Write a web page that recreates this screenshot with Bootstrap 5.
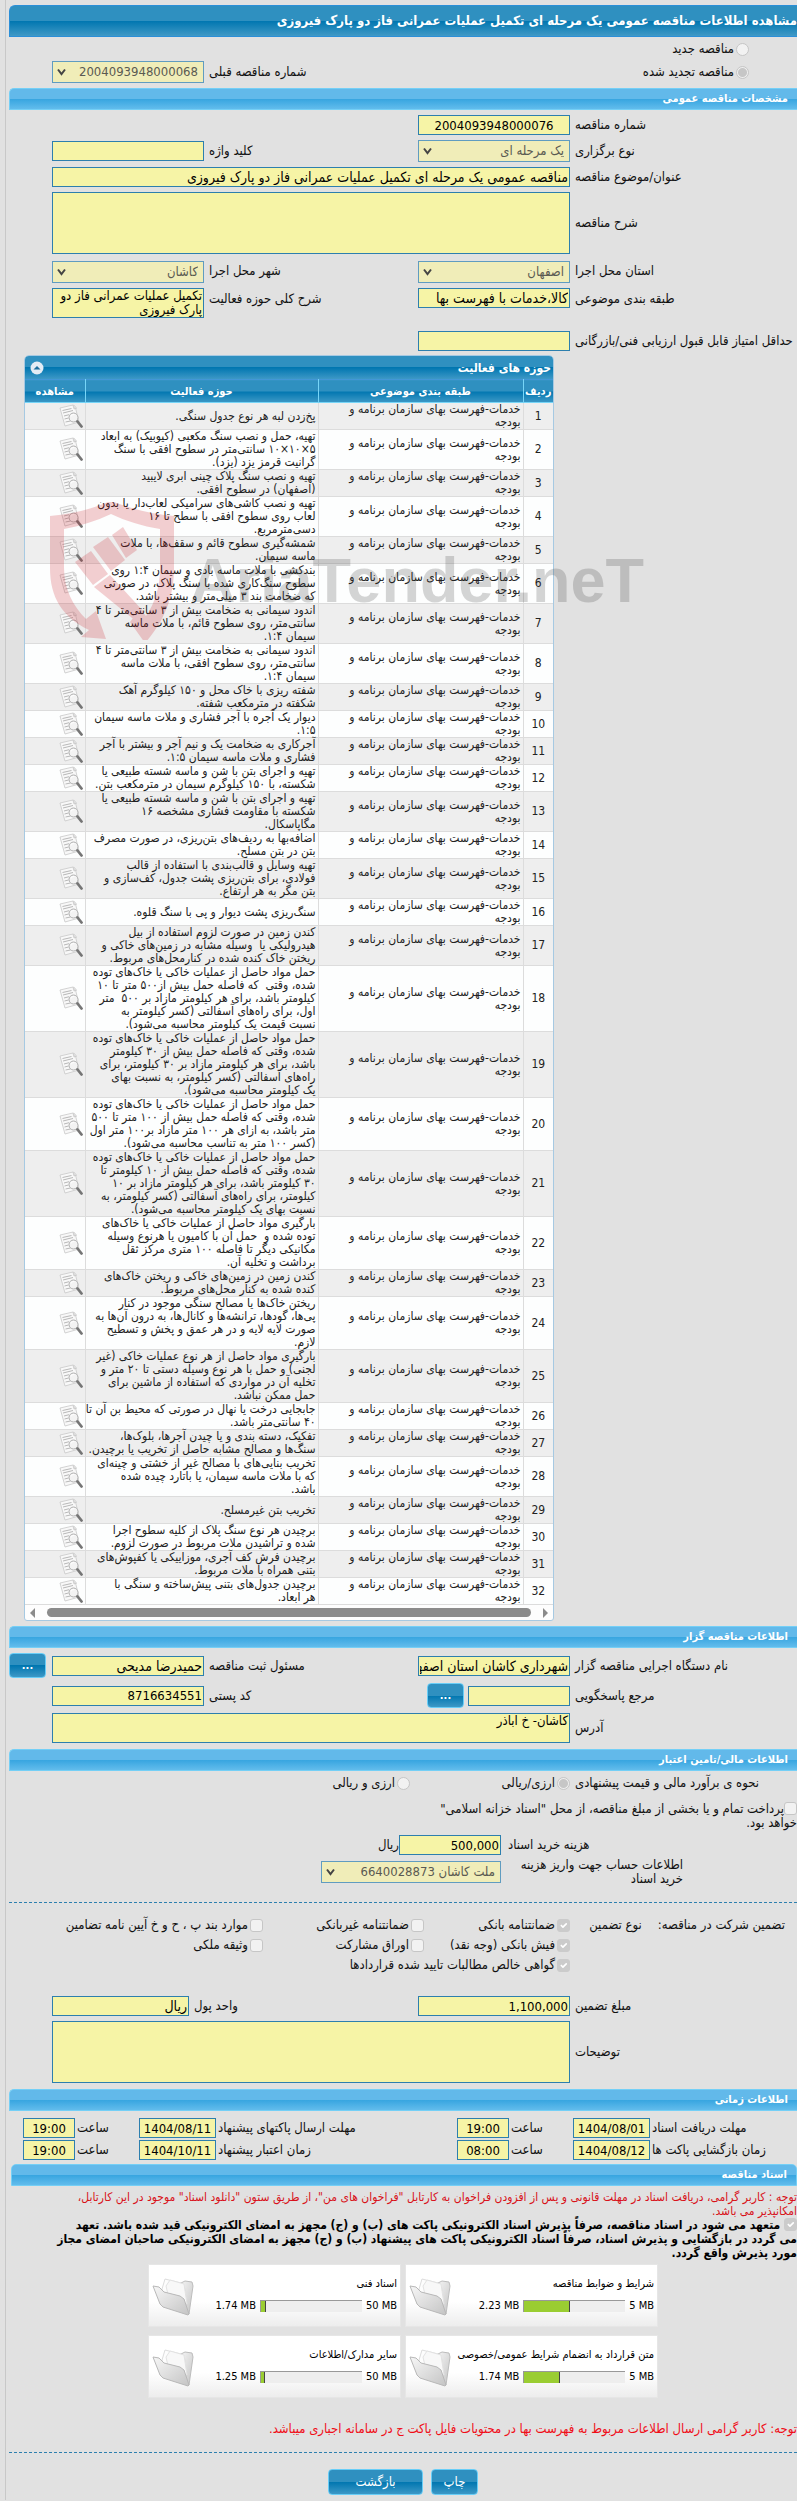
<!DOCTYPE html>
<html lang="fa" dir="rtl">
<head>
<meta charset="utf-8">
<meta name="viewport" content="width=device-width, initial-scale=1">
<title>مشاهده اطلاعات مناقصه عمومی</title>
<link href="https://cdn.jsdelivr.net/npm/bootstrap@5.3.0/dist/css/bootstrap.min.css" rel="stylesheet">
<style>
  body { background: #e1e1e1; color: #111; font: 13px/14px "DejaVu Sans Condensed", "DejaVu Sans", sans-serif; overflow-x: hidden; }
  .page-shell { margin-left: 5px; padding: 5px 0 5px 3px; border-left: 1px solid #c8c8c8; }
  .title-bar { height: 32px; font-size: 13px; font-weight: bold; color: #fff; border: 1px solid #2b8fd8; border-right: 0; border-radius: 6px 0 0 0; background: linear-gradient(#2f90c0 50%, #0076b0 50%, #4099c6); }
  .section-bar { height: 22px; padding: 0 9px; font-size: 11px; font-weight: bold; color: #fff; border: 1px solid #74cff6; border-right: 0; border-radius: 5px 0 0 0; background: linear-gradient(#62b9ea 50%, #37a5e0 50%, #62bcec); }
  .section-bar.inset { margin-left: 2px; border-radius: 5px 5px 0 0; border-right: 1px solid #74cff6; }

  .form-grid { display: grid; grid-template-columns: 227px 152px 1fr 152px 43px; row-gap: 5px; padding-top: 5px; align-items: center; }
  .form-grid > label { padding-left: 5px; text-align: left; white-space: nowrap; }
  .form-grid.closed { padding-bottom: 6px; }
  .kinds { padding: 5px 0; }
  .kinds > .pair { padding-right: 48px; }
  .wide { grid-column: 2 / 5; }
  .next-row { grid-column-start: 1; }
  .form-control.fld, .form-select.fld { min-height: 0; height: 20px; padding: 0 1px; border: 1px solid #2d7fae; border-radius: 0; background-color: #f6f4a6; color: #000; font-size: 13px; line-height: 14px; opacity: 1; }
  .form-control.fld { box-shadow: none; }
  .form-control.fld.fa-text { font-size: 14px; }
  textarea.form-control.fld { resize: none; height: 30px; overflow: hidden; }
  textarea.form-control.fld.tall { height: 62px; }
  .form-select.fld { height: 22px; padding: 0 5px 0 20px; border-color: #609cc0; background-color: #f0edb8; color: #5a5a52; line-height: 18px; background-size: 9px 8px; background-position: left 4px center;
    --bs-form-select-bg-img: url("data:image/svg+xml,%3csvg xmlns='http://www.w3.org/2000/svg' viewBox='0 0 9 8'%3e%3cpath fill='none' stroke='%23444' stroke-width='2' d='M1 1.5l3.5 4.5L8 1.5'/%3e%3c/svg%3e"); background-image: var(--bs-form-select-bg-img); }
  .form-select.fld.place { margin-top: 2px; }
  .form-check-input.tick { float: none; flex: none; width: 13px; height: 13px; margin: 0; border: 1px solid #c6c6c6; border-radius: 3px; background-color: #f2f2f2; opacity: 1; }
  .form-check-input.tick[type=radio] { border-radius: 50%; }
  .form-check-input.tick:disabled ~ label { opacity: 1; }
  .form-check-input.tick[type=checkbox]:checked { background-color: #cbcbcb; border-color: #cbcbcb; }
  .form-check-input.tick[type=radio]:checked { background: radial-gradient(circle, #c6c6c6 4px, #eee 5px); border-color: #c6c6c6; }
  .pair { display: flex; align-items: center; gap: 2px; white-space: nowrap; }
  .btn.act { --bs-btn-color: #fff; --bs-btn-hover-color: #fff; height: 26px; padding: 0 4px; border: 1px solid #68cdf7; border-radius: 4px; background: linear-gradient(#2f90c0 50%, #0076b0 50%, #3d98c6); font-size: 13px; line-height: 14px; }
  .btn.dots { width: 37px; height: 25px; font-weight: bold; font-size: 11px; }

  .grid-box { position: relative; margin: 4px 243px 5px 15px; border: 1px solid #a6c9e2; border-radius: 5px 5px 3px 3px; background: #fdfdfd; }
  .grid-title { height: 23px; padding: 0 2px 0 5px; color: #fff; font-size: 12px; font-weight: bold; border-radius: 4px 4px 0 0; background: linear-gradient(#2f90c0 50%, #0076b0 50%, #3d98c6); }
  .table.acts { table-layout: fixed; margin: 0; color: #222; font-size: 12px; line-height: 13px; --bs-table-bg: #fdfefe; --bs-table-striped-bg: #eeeeee; --bs-table-striped-color: #222; }
  .table.acts > thead th { height: 23px; padding: 0; text-align: center; vertical-align: middle; color: #fff; font-size: 11px; white-space: nowrap; border: 0; border-top: 1px solid #4297d7; border-bottom: 1px solid #77d5f7; border-left: 1px solid #77d5f7; background: linear-gradient(#2f90c0 50%, #0076b0 50%, #3d98c6); }
  .table.acts > tbody td { padding: 0 2px; vertical-align: middle; border: 0; border-bottom: 1px solid #dcdcdc; border-left: 1px solid #dcdcdc; }
  .table.acts > tbody td:nth-child(2), .table.acts > tbody td:nth-child(3) { white-space: nowrap; }
  .table.acts th:last-child, .table.acts > tbody td:last-child { border-left: 0; }
  .table.acts > tbody td:first-child { text-align: center; }
  .table.acts svg { display: block; width: 24px; height: 25px; margin: 0; }
  .hbar { height: 15px; padding: 0 5px; gap: 12px; }
  .hbar i { border: 5px solid transparent; border-left: 5px solid #8b8b8b; border-right: 0; }
  .hbar i:last-child { border-left: 0; border-right: 5px solid #8b8b8b; }
  .hbar span { flex: 1; height: 9px; border-radius: 5px; background: #8b8b8b; }
  .watermark { position: absolute; left: 25px; top: 144px; width: 615px; height: 140px; opacity: .2; pointer-events: none; direction: ltr; }
  .watermark text { font: bold 63px "Liberation Sans", sans-serif; fill: #333; }

  .treasury { width: 47%; padding-top: 12px; }
  .cost-grid { display: grid; grid-template-columns: 296px 180px 1fr; row-gap: 3px; padding-top: 5px; align-items: center; }
  .cost-grid > label { padding-left: 7px; }
  .cost-grid > label span { display: inline-block; width: 175px; }
  .guarantee { display: grid; grid-template-columns: 227px 146px 161px 1fr; grid-auto-rows: 20px; align-items: center; }
  .guarantee > .lead-in { padding-right: 12px; white-space: nowrap; }
  .dash { border-top: 1px dashed #2d7fae; }
  .unit-cell { padding-right: 15px; }
  .form-grid > .unit-label { margin-left: -15px; }
  .time-grid { display: grid; grid-template-columns: 147px 77px 64px 52px 1fr 77px 64px 52px 14px; row-gap: 2px; padding: 7px 0 4px; align-items: center; }
  .time-grid > label { padding-left: 2px; text-align: left; white-space: nowrap; }
  .time-grid .fld { text-align: center; padding: 0; }
  .docs { display: grid; grid-template-columns: 253px 253px; gap: 8px 4px; justify-content: center; }
  .doc { display: flex; direction: ltr; height: 63px; padding: 0 3px; border: 1px solid #e6e6e6; background: linear-gradient(#fff 60%, #ededed); font-size: 11px; color: #000; }
  .doc > svg { width: 44px; height: 40px; margin-top: 12px; flex: none; }
  .progress.meter { width: 102px; height: 12px; border-radius: 0; background: #eee; border-top: 1px solid #999; border-left: 1px solid #999; }
  .meter .progress-bar { background: #9acd32; border-right: 1px solid #444; }
  .note { color: #d8121a; font-size: 12px; }
  .pledge { font-size: 12px; font-weight: bold; color: #000; }
  .late-note { color: #f00d18; }
</style>
</head>
<body>
<svg width="0" height="0" class="position-absolute" aria-hidden="true">
  <defs><linearGradient id="fold" x1="0" y1="0" x2="1" y2="1"><stop offset="0" stop-color="#f7f7f7"/><stop offset="1" stop-color="#c4c4c4"/></linearGradient></defs>
  <symbol id="view" viewBox="0 0 24 25">
    <path d="M1 4l13-3 2 1 4 16-14 4z" fill="#f8f8f8" stroke="#c8c8c8" stroke-width=".8"/>
    <path d="M3.500 6.500l9-2M4 9l10-2.500M5 12l5-1.300M5.500 15l4-1M6.500 18l5-1" stroke="#b8b8b8" fill="none"/>
    <path d="M14 1l1 4 3-1" fill="#ddd" stroke="#c4c4c4" stroke-width=".7"/>
    <circle cx="14.500" cy="13.500" r="4.500" fill="#f2f2f2" fill-opacity=".9" stroke="#b0b0b0"/>
    <path d="M12 12.500a3 3 0 0 1 3.500-2" stroke="#fff" fill="none"/>
    <path d="M18.500 17.500l4 5" stroke="#757575" stroke-width="2.800" stroke-linecap="round"/>
  </symbol>
  <symbol id="folder" viewBox="0 0 44 40">
    <path d="M27 7l6-3 7 1 1 4-4 28-4-5z" fill="url(#fold)" stroke="#bdbdbd"/>
    <path d="M10 12L13 2l16 4 4 6-1 19-20-8z" fill="#fdfdfd" stroke="#dcdcdc"/>
    <path d="M14 9l4-6 14 4 3 20-18-5z" fill="#f8f8f8" stroke="#e2e2e2"/>
    <path d="M1 9l6 1 5 5 16 4 4 3 5 15-1 1-25-8-3-3z" fill="url(#fold)" stroke="#b8b8b8"/>
  </symbol>
</svg>

<main class="page-shell">
  <h1 class="title-bar d-flex align-items-center mb-0">مشاهده اطلاعات مناقصه عمومی یک مرحله ای تکمیل عملیات عمرانی فاز دو پارک فیروزی</h1>
  <div class="form-grid kinds">
    <div class="pair"><input class="form-check-input tick" type="radio" name="kind" id="k1" disabled><label for="k1">مناقصه جدید</label></div>
    <div class="pair next-row"><input class="form-check-input tick" type="radio" name="kind" id="k2" checked disabled><label for="k2">مناقصه تجدید شده</label></div>
    <span></span>
    <label for="prev">شماره مناقصه قبلی</label>
    <select id="prev" class="form-select fld" disabled><option>2004093948000068</option></select>
  </div>

  <h2 class="section-bar d-flex align-items-center mb-0">مشخصات مناقصه عمومی</h2>
  <section class="form-grid">
    <label for="no">شماره مناقصه</label>
    <input id="no" class="form-control fld text-center" value="2004093948000076">
    <label for="type" class="next-row">نوع برگزاری</label>
    <select id="type" class="form-select fld" disabled><option>یک مرحله ای</option></select>
    <label for="kw">کلید واژه</label>
    <input id="kw" class="form-control fld">
    <label for="subj" class="next-row">عنوان/موضوع مناقصه</label>
    <input id="subj" class="form-control fld fa-text wide" value="مناقصه عمومی یک مرحله ای تکمیل عملیات عمرانی فاز دو پارک فیروزی">
    <label for="desc" class="next-row">شرح مناقصه</label>
    <textarea id="desc" class="form-control fld tall wide"></textarea>
    <label for="prov" class="next-row">استان محل اجرا</label>
    <select id="prov" class="form-select fld place" disabled><option>اصفهان</option></select>
    <label for="city">شهر محل اجرا</label>
    <select id="city" class="form-select fld place" disabled><option>کاشان</option></select>
    <label for="cls" class="next-row align-self-start pt-1">طبقه بندی موضوعی</label>
    <input id="cls" class="form-control fld fa-text align-self-start" value="کالا،خدمات با فهرست بها">
    <label for="act" class="align-self-start pt-1">شرح کلی حوزه فعالیت</label>
    <textarea id="act" class="form-control fld">تکمیل عملیات عمرانی فاز دو پارک فیروزی</textarea>
    <label for="score" class="next-row mt-2">حداقل امتیاز قابل قبول ارزیابی فنی/بازرگانی</label>
    <input id="score" class="form-control fld mt-2">
  </section>

  <section class="grid-box">
    <div class="grid-title d-flex align-items-center justify-content-between"><span>حوزه های فعالیت</span>
      <svg width="14" height="14" viewBox="0 0 14 14"><circle cx="7" cy="7" r="6.500" fill="#e4ecf5"/><path d="M3.500 8.500L7 5l3.500 3.500z" fill="#1d6e9e"/></svg></div>
    <table class="table table-striped acts">
      <colgroup><col style="width:30px"><col style="width:205px"><col><col style="width:60px"></colgroup>
      <thead><tr><th>ردیف</th><th>طبقه بندی موضوعی</th><th>حوزه فعالیت</th><th>مشاهده</th></tr></thead>
      <tbody>
      <tr><td>1</td><td>خدمات-فهرست بهای سازمان برنامه و<br>بودجه</td><td>پخ‌زدن لبه هر نوع جدول سنگی.</td><td><svg><use href="#view"/></svg></td></tr>
      <tr><td>2</td><td>خدمات-فهرست بهای سازمان برنامه و<br>بودجه</td><td>تهیه، حمل و نصب سنگ مکعبی (کیوبیک) به ابعاد<br>۵×۱۰×۱۰ سانتی‌متر در سطوح افقی با سنگ<br>گرانیت قرمز یزد (یزد).</td><td><svg><use href="#view"/></svg></td></tr>
      <tr><td>3</td><td>خدمات-فهرست بهای سازمان برنامه و<br>بودجه</td><td>تهیه و نصب سنگ پلاک چینی ابری لایبید<br>(اصفهان) در سطوح افقی.</td><td><svg><use href="#view"/></svg></td></tr>
      <tr><td>4</td><td>خدمات-فهرست بهای سازمان برنامه و<br>بودجه</td><td>تهیه و نصب کاشی‌های سرامیکی لعاب‌دار یا بدون<br>لعاب روی سطوح افقی با سطح تا ۱۶<br>دسی‌مترمربع.</td><td><svg><use href="#view"/></svg></td></tr>
      <tr><td>5</td><td>خدمات-فهرست بهای سازمان برنامه و<br>بودجه</td><td>شمشه‌گیری سطوح قائم و سقف‌ها، با ملات<br>ماسه سیمان.</td><td><svg><use href="#view"/></svg></td></tr>
      <tr><td>6</td><td>خدمات-فهرست بهای سازمان برنامه و<br>بودجه</td><td>بندکشی با ملات ماسه بادی و سیمان ۱:۴ روی<br>سطوح سنگ‌کاری شده با سنگ پلاک، در صورتی<br>که ضخامت بند ۳ میلی‌متر و بیشتر باشد.</td><td><svg><use href="#view"/></svg></td></tr>
      <tr><td>7</td><td>خدمات-فهرست بهای سازمان برنامه و<br>بودجه</td><td>اندود سیمانی به ضخامت بیش از ۳ سانتی‌متر تا ۴<br>سانتی‌متر، روی سطوح قائم، با ملات ماسه<br>سیمان ۱:۴.</td><td><svg><use href="#view"/></svg></td></tr>
      <tr><td>8</td><td>خدمات-فهرست بهای سازمان برنامه و<br>بودجه</td><td>اندود سیمانی به ضخامت بیش از ۳ سانتی‌متر تا ۴<br>سانتی‌متر، روی سطوح افقی، با ملات ماسه<br>سیمان ۱:۴.</td><td><svg><use href="#view"/></svg></td></tr>
      <tr><td>9</td><td>خدمات-فهرست بهای سازمان برنامه و<br>بودجه</td><td>شفته ریزی با خاک محل و ۱۵۰ کیلوگرم آهک<br>شکفته در مترمکعب شفته.</td><td><svg><use href="#view"/></svg></td></tr>
      <tr><td>10</td><td>خدمات-فهرست بهای سازمان برنامه و<br>بودجه</td><td>دیوار یک آجره با آجر فشاری و ملات ماسه سیمان<br>۱:۵.</td><td><svg><use href="#view"/></svg></td></tr>
      <tr><td>11</td><td>خدمات-فهرست بهای سازمان برنامه و<br>بودجه</td><td>آجرکاری به ضخامت یک و نیم آجر و بیشتر با آجر<br>فشاری و ملات ماسه سیمان ۱:۵.</td><td><svg><use href="#view"/></svg></td></tr>
      <tr><td>12</td><td>خدمات-فهرست بهای سازمان برنامه و<br>بودجه</td><td>تهیه و اجرای بتن با شن و ماسه شسته طبیعی یا<br>شکسته، با ۱۵۰ کیلوگرم سیمان در مترمکعب بتن.</td><td><svg><use href="#view"/></svg></td></tr>
      <tr><td>13</td><td>خدمات-فهرست بهای سازمان برنامه و<br>بودجه</td><td>تهیه و اجرای بتن با شن و ماسه شسته طبیعی یا<br>شکسته با مقاومت فشاری مشخصه ۱۶<br>مگاپاسکال.</td><td><svg><use href="#view"/></svg></td></tr>
      <tr><td>14</td><td>خدمات-فهرست بهای سازمان برنامه و<br>بودجه</td><td>اضافه‌بها به ردیف‌های بتن‌ریزی، در صورت مصرف<br>بتن در بتن مسلح.</td><td><svg><use href="#view"/></svg></td></tr>
      <tr><td>15</td><td>خدمات-فهرست بهای سازمان برنامه و<br>بودجه</td><td>تهیه وسایل و قالب‌بندی با استفاده از قالب<br>فولادی، برای بتن‌ریزی پشت جدول، کف‌سازی و<br>بتن مگر به هر ارتفاع.</td><td><svg><use href="#view"/></svg></td></tr>
      <tr><td>16</td><td>خدمات-فهرست بهای سازمان برنامه و<br>بودجه</td><td>سنگ‌ریزی پشت دیوار و پی با سنگ قلوه.</td><td><svg><use href="#view"/></svg></td></tr>
      <tr><td>17</td><td>خدمات-فهرست بهای سازمان برنامه و<br>بودجه</td><td>کندن زمین در صورت لزوم استفاده از بیل<br>هیدرولیکی یا&nbsp; وسیله مشابه در زمین‌های خاکی و<br>ریختن خاک کنده شده در کنارمحل‌های مربوط.</td><td><svg><use href="#view"/></svg></td></tr>
      <tr><td>18</td><td>خدمات-فهرست بهای سازمان برنامه و<br>بودجه</td><td>حمل مواد حاصل از عملیات خاکی یا خاک‌های توده<br>شده، وقتی&nbsp; که فاصله حمل بیش از۵۰۰ متر تا ۱۰<br>کیلومتر باشد، برای هر کیلومتر مازاد بر ۵۰۰&nbsp; متر<br>اول، برای راه‌های آسفالتی (کسر کیلومتر به<br>نسبت قیمت یک کیلومتر محاسبه می‌شود).</td><td><svg><use href="#view"/></svg></td></tr>
      <tr><td>19</td><td>خدمات-فهرست بهای سازمان برنامه و<br>بودجه</td><td>حمل مواد حاصل از عملیات خاکی یا خاک‌های توده<br>شده، وقتی که فاصله حمل بیش از ۳۰ کیلومتر<br>باشد، برای هر کیلومتر مازاد بر ۳۰ کیلومتر، برای<br>راه‌های آسفالتی (کسر کیلومتر، به نسبت بهای<br>یک کیلومتر محاسبه می‌شود).</td><td><svg><use href="#view"/></svg></td></tr>
      <tr><td>20</td><td>خدمات-فهرست بهای سازمان برنامه و<br>بودجه</td><td>حمل مواد حاصل از عملیات خاکی یا خاک‌های توده<br>شده، وقتی که فاصله حمل بیش از ۱۰۰ متر تا ۵۰۰<br>متر باشد، به ازای هر ۱۰۰ متر مازاد بر۱۰۰ متر اول<br>(کسر ۱۰۰ متر به تناسب محاسبه می‌شود).</td><td><svg><use href="#view"/></svg></td></tr>
      <tr><td>21</td><td>خدمات-فهرست بهای سازمان برنامه و<br>بودجه</td><td>حمل مواد حاصل از عملیات خاکی یا خاک‌های توده<br>شده، وقتی که فاصله حمل بیش از ۱۰ کیلومتر تا<br>۳۰ کیلومتر باشد، برای هر کیلومتر مازاد بر ۱۰<br>کیلومتر، برای راه‌های آسفالتی (کسر کیلومتر، به<br>نسبت بهای یک کیلومتر محاسبه می‌شود).</td><td><svg><use href="#view"/></svg></td></tr>
      <tr><td>22</td><td>خدمات-فهرست بهای سازمان برنامه و<br>بودجه</td><td>بارگیری مواد حاصل از عملیات خاکی یا خاک‌های<br>توده شده و&nbsp; حمل آن با کامیون یا هرنوع وسیله<br>مکانیکی دیگر تا فاصله ۱۰۰ متری مرکز ثقل<br>برداشت و تخلیه آن.</td><td><svg><use href="#view"/></svg></td></tr>
      <tr><td>23</td><td>خدمات-فهرست بهای سازمان برنامه و<br>بودجه</td><td>کندن زمین در زمین‌های خاکی و ریختن خاک‌های<br>کنده شده به کنار محل‌های مربوط.</td><td><svg><use href="#view"/></svg></td></tr>
      <tr><td>24</td><td>خدمات-فهرست بهای سازمان برنامه و<br>بودجه</td><td>ریختن خاک‌ها یا مصالح سنگی موجود در کنار<br>پی‌ها، گودها، ترانشه‌ها و کانال‌ها، به درون آن‌ها به<br>صورت لایه لایه و در هر عمق و پخش و تسطیح<br>لازم.</td><td><svg><use href="#view"/></svg></td></tr>
      <tr><td>25</td><td>خدمات-فهرست بهای سازمان برنامه و<br>بودجه</td><td>بارگیری مواد حاصل از هر نوع عملیات خاکی (غیر<br>لجنی) و حمل با هر نوع وسیله دستی تا ۲۰ متر و<br>تخلیه آن در مواردی که استفاده از ماشین برای<br>حمل ممکن نباشد.</td><td><svg><use href="#view"/></svg></td></tr>
      <tr><td>26</td><td>خدمات-فهرست بهای سازمان برنامه و<br>بودجه</td><td>جابجایی درخت یا نهال در صورتی که محیط بن آن تا<br>۴۰ سانتی‌متر باشد.</td><td><svg><use href="#view"/></svg></td></tr>
      <tr><td>27</td><td>خدمات-فهرست بهای سازمان برنامه و<br>بودجه</td><td>تفکیک، دسته بندی و یا چیدن آجرها، بلوک‌ها،<br>سنگ‌ها و مصالح مشابه حاصل از تخریب یا برچیدن.</td><td><svg><use href="#view"/></svg></td></tr>
      <tr><td>28</td><td>خدمات-فهرست بهای سازمان برنامه و<br>بودجه</td><td>تخریب بنایی‌های با مصالح غیر از خشتی و چینه‌ای<br>که با ملات ماسه سیمان، یا باتارد چیده شده<br>باشد.</td><td><svg><use href="#view"/></svg></td></tr>
      <tr><td>29</td><td>خدمات-فهرست بهای سازمان برنامه و<br>بودجه</td><td>تخریب بتن غیرمسلح.</td><td><svg><use href="#view"/></svg></td></tr>
      <tr><td>30</td><td>خدمات-فهرست بهای سازمان برنامه و<br>بودجه</td><td>برچیدن هر نوع سنگ پلاک از کلیه سطوح اجرا<br>شده و تراشیدن ملات مربوط در صورت لزوم.</td><td><svg><use href="#view"/></svg></td></tr>
      <tr><td>31</td><td>خدمات-فهرست بهای سازمان برنامه و<br>بودجه</td><td>برچیدن فرش کف آجری، موزاییکی یا کفپوش‌های<br>بتنی همراه با ملات مربوط.</td><td><svg><use href="#view"/></svg></td></tr>
      <tr><td>32</td><td>خدمات-فهرست بهای سازمان برنامه و<br>بودجه</td><td>برچیدن جدول‌های بتنی پیش‌ساخته و سنگی با<br>هر ابعاد.</td><td><svg><use href="#view"/></svg></td></tr>
      </tbody>
    </table>
    <div class="hbar d-flex align-items-center"><i></i><span></span><i></i></div>
    <svg class="watermark" viewBox="0 0 615 140" aria-hidden="true">
      <g fill="#c8141e">
        <path d="M0 16C22 14 42 9 58 2h6c18 7 38 12 60 14v52c0 32-12 56-29 75L80 122l10-13 6 7c9-13 14-29 14-48V29C92 26 76 21 61 14 46 21 30 26 14 29v39c0 21 9 38 22 51l10-8 10 28-25-2 8-7C12 117 0 97 0 68z"/>
        <path d="M25 62l16-11 17 23-15 11zM43 47l15-10 17 23-14 11zM62 35l11-8 14 23-11 8z"/>
        <path d="M44 87l16-12 34 37-7 10z"/>
      </g>
      <text x="140" y="102">AriaTender.neT</text>
    </svg>
  </section>

  <h2 class="section-bar d-flex align-items-center mb-0">اطلاعات مناقصه گزار</h2>
  <section class="form-grid closed">
    <label for="org">نام دستگاه اجرایی مناقصه گزار</label>
    <input id="org" class="form-control fld fa-text" value="شهرداری کاشان استان اصفهان">
    <label for="resp">مسئول ثبت مناقصه</label>
    <input id="resp" class="form-control fld fa-text" value="حمیدرضا مدیحی">
    <div class="d-flex justify-content-end"><button type="button" class="btn act dots">...</button></div>
    <label for="ref" class="next-row">مرجع پاسخگویی</label>
    <div class="d-flex align-items-center gap-1"><input id="ref" class="form-control fld flex-grow-0" style="width:102px"><button type="button" class="btn act dots">...</button></div>
    <label for="zip">کد پستی</label>
    <input id="zip" class="form-control fld" value="8716634551">
    <label for="addr" class="next-row">آدرس</label>
    <textarea id="addr" class="form-control fld wide">کاشان- خ اباذر</textarea>
  </section>

  <h2 class="section-bar d-flex align-items-center mb-0">اطلاعات مالی/تامین اعتبار</h2>
  <section>
    <div class="form-grid">
      <label for="c1">نحوه ی برآورد مالی و قیمت پیشنهادی</label>
      <div class="pair"><input class="form-check-input tick" type="radio" name="cur" id="c1" checked disabled><label for="c1">ارزی/ریالی</label></div>
      <div class="pair pe-2"><input class="form-check-input tick" type="radio" name="cur" id="c2" disabled><label for="c2">ارزی و ریالی</label></div>
    </div>
    <div class="treasury"><input class="form-check-input tick" type="checkbox" id="isl" disabled><label class="d-inline" for="isl">پرداخت تمام و یا بخشی از مبلغ مناقصه، از محل "اسناد خزانه اسلامی" خواهد بود.</label></div>
    <div class="cost-grid">
      <label for="fee" class="text-start">هزینه خرید اسناد</label>
      <div class="d-flex align-items-center"><input id="fee" class="form-control fld" style="width:102px" value="500,000">ریال</div>
      <label for="acc" class="next-row text-start"><span class="text-end">اطلاعات حساب جهت واریز هزینه خرید اسناد</span></label>
      <select id="acc" class="form-select fld" disabled><option>ملت کاشان 6640028873</option></select>
    </div>
    <hr class="dash opacity-100 my-0 mt-3">
    <div class="guarantee mt-2 pt-1">
      <div class="lead-in d-flex gap-3"><span>تضمین شرکت در مناقصه:</span><span>نوع تضمین</span></div>
      <div class="pair"><input class="form-check-input tick" type="checkbox" id="g1" checked disabled><label for="g1">ضمانتنامه بانکی</label></div>
      <div class="pair"><input class="form-check-input tick" type="checkbox" id="g2" disabled><label for="g2">ضمانتنامه غیربانکی</label></div>
      <div class="pair"><input class="form-check-input tick" type="checkbox" id="g3" disabled><label for="g3">موارد بند پ ، ح و خ آیین نامه تضامین</label></div>
      <span></span>
      <div class="pair"><input class="form-check-input tick" type="checkbox" id="g4" checked disabled><label for="g4">فیش بانکی (وجه نقد)</label></div>
      <div class="pair"><input class="form-check-input tick" type="checkbox" id="g5" disabled><label for="g5">اوراق مشارکت</label></div>
      <div class="pair"><input class="form-check-input tick" type="checkbox" id="g6" disabled><label for="g6">وثیقه ملکی</label></div>
      <span></span>
      <div class="pair"><input class="form-check-input tick" type="checkbox" id="g7" checked disabled><label for="g7">گواهی خالص مطالبات تایید شده قراردادها</label></div>
    </div>
    <div class="form-grid closed mt-3">
      <label for="amt">مبلغ تضمین</label>
      <input id="amt" class="form-control fld" value="1,100,000">
      <label for="unit" class="unit-label">واحد پول</label>
      <div class="unit-cell"><input id="unit" class="form-control fld fa-text" value="ریال"></div>
      <label for="notes" class="next-row">توضیحات</label>
      <textarea id="notes" class="form-control fld tall wide"></textarea>
    </div>
  </section>

  <h2 class="section-bar d-flex align-items-center mb-0">اطلاعات زمانی</h2>
  <section class="time-grid">
    <label for="d1">مهلت دریافت اسناد</label><input id="d1" class="form-control fld" value="1404/08/01">
    <label for="h1">ساعت</label><input id="h1" class="form-control fld" value="19:00">
    <label for="d2">مهلت ارسال پاکتهای پیشنهاد</label><input id="d2" class="form-control fld" value="1404/08/11">
    <label for="h2">ساعت</label><input id="h2" class="form-control fld" value="19:00">
    <label for="d3" class="next-row">زمان بازگشایی پاکت ها</label><input id="d3" class="form-control fld" value="1404/08/12">
    <label for="h3">ساعت</label><input id="h3" class="form-control fld" value="08:00">
    <label for="d4">زمان اعتبار پیشنهاد</label><input id="d4" class="form-control fld" value="1404/10/11">
    <label for="h4">ساعت</label><input id="h4" class="form-control fld" value="19:00">
  </section>

  <h2 class="section-bar inset d-flex align-items-center mb-0">اسناد مناقصه</h2>
  <p class="note mb-0 pt-1">توجه : کاربر گرامی، دریافت اسناد در مهلت قانونی و پس از افزودن فراخوان به کارتابل "فراخوان های من"، از طریق ستون "دانلود اسناد" موجود در این کارتابل،<br>امکانپذیر می باشد.</p>
  <div class="pledge mb-1"><input class="form-check-input tick" type="checkbox" id="und" checked disabled> <label class="d-inline" for="und">متعهد می شود در اسناد مناقصه، صرفاً پذیرش اسناد الکترونیکی پاکت های (ب) و (ج) مجهز به امضای الکترونیکی قید شده باشد. تعهد<br>می گردد در بازگشایی و پذیرش اسناد، صرفاً اسناد الکترونیکی پاکت های پیشنهاد (ب) و (ج) مجهز به امضای الکترونیکی صاحبان امضای مجاز<br>مورد پذیرش واقع گردد.</label></div>
  <section class="docs">
    <div class="doc"><svg><use href="#folder"/></svg><div class="flex-grow-1 pt-2"><div class="mt-1 text-end" dir="rtl">شرایط و ضوابط مناقصه</div><div class="d-flex justify-content-end align-items-center gap-1 mt-2">2.23 MB<div class="progress meter"><div class="progress-bar" style="width:45%"></div></div>5 MB</div></div></div>
    <div class="doc"><svg><use href="#folder"/></svg><div class="flex-grow-1 pt-2"><div class="mt-1 text-end" dir="rtl">اسناد فنی</div><div class="d-flex justify-content-end align-items-center gap-1 mt-2">1.74 MB<div class="progress meter"><div class="progress-bar" style="width:5%"></div></div>50 MB</div></div></div>
    <div class="doc"><svg><use href="#folder"/></svg><div class="flex-grow-1 pt-2"><div class="mt-1 text-end" dir="rtl">متن قرارداد به انضمام شرایط عمومی/خصوصی</div><div class="d-flex justify-content-end align-items-center gap-1 mt-2">1.74 MB<div class="progress meter"><div class="progress-bar" style="width:35%"></div></div>5 MB</div></div></div>
    <div class="doc"><svg><use href="#folder"/></svg><div class="flex-grow-1 pt-2"><div class="mt-1 text-end" dir="rtl">سایر مدارک/اطلاعات</div><div class="d-flex justify-content-end align-items-center gap-1 mt-2">1.25 MB<div class="progress meter"><div class="progress-bar" style="width:4%"></div></div>50 MB</div></div></div>
  </section>
  <p class="late-note mt-4 mb-3">توجه: کاربر گرامی ارسال اطلاعات مربوط به فهرست بها در محتویات فایل پاکت ج در سامانه اجباری میباشد.</p>
  <hr class="dash opacity-100 my-0 mb-3">
  <div class="d-flex justify-content-center gap-2"><button type="button" class="btn act" style="width:47px">چاپ</button><button type="button" class="btn act" style="width:95px">بازگشت</button></div>
</main>
<script src="https://cdn.jsdelivr.net/npm/bootstrap@5.3.0/dist/js/bootstrap.bundle.min.js"></script>
</body>
</html>
